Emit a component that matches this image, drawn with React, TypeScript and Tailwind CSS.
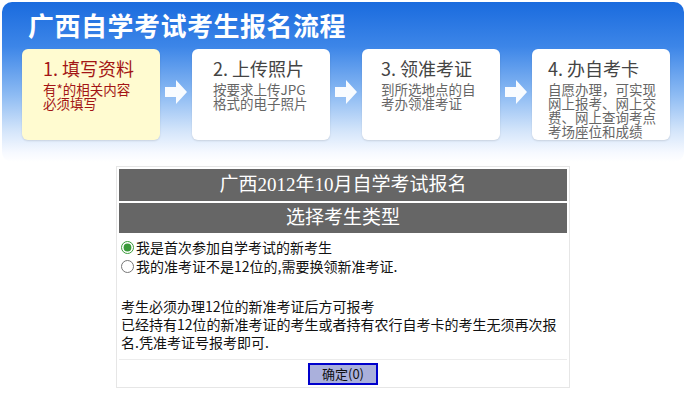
import React from 'react';

const sans = { fontFamily: '"Noto Sans CJK SC", "Liberation Sans", sans-serif' };

type Step = { title: string; lines: string[]; active?: boolean; pad: string };

const steps: Step[] = [
  { title: '1. 填写资料', lines: ['有*的相关内容', '必须填写'], active: true, pad: 'pl-[21px]' },
  { title: '2. 上传照片', lines: ['按要求上传JPG', '格式的电子照片'], pad: 'pl-[21px]' },
  { title: '3. 领准考证', lines: ['到所选地点的自', '考办领准考证'], pad: 'pl-[19px]' },
  { title: '4. 办自考卡', lines: ['自愿办理，可实现', '网上报考、网上交', '费、网上查询考点', '考场座位和成绩'], pad: 'pl-[16px]' },
];

function Arrow() {
  return (
    <div className="flex w-[32px] shrink-0 justify-center pt-[30px]">
      <svg width="24" height="26" viewBox="0 0 24 26">
        <path d="M1 8 H12 V1 L23 13 L12 25 V18 H1 Z" fill="#ffffff" fillOpacity="0.95" />
      </svg>
    </div>
  );
}

function StepBox({ step }: { step: Step }) {
  return (
    <div
      className={`h-[91px] w-[138px] shrink-0 rounded-[6px] pt-[7px] ${step.pad} ${
        step.active ? 'bg-[#fffbd0] text-[#a31515]' : 'bg-white text-[#555]'
      } shadow-[0_1px_2px_rgba(0,0,0,0.12)]`}
    >
      <div className={`text-[18px] leading-[24px] ${step.active ? '' : 'text-[#444]'}`}>{step.title}</div>
      <div className={`mt-[2px] text-[13.5px] leading-[14px] ${step.active ? '' : 'text-[#666]'}`}>
        {step.lines.map((l) => (
          <div key={l} className="whitespace-nowrap">{l}</div>
        ))}
      </div>
    </div>
  );
}

export default function App() {
  return (
    <div className="h-[404px] w-[686px] overflow-hidden bg-white" style={sans}>
      <div className="mx-[2px] mt-[2px] h-[160px] rounded-[10px] bg-[linear-gradient(180deg,#1a6bde_0%,#3d86e8_28%,#8dbbf3_58%,#d2e4fa_80%,#f6f9ff_94%,#ffffff_100%)] px-[20px]">
        <h1 className="pl-[6px] pt-[6px] text-[26px] font-bold leading-[34px] tracking-[0.5px] text-white">
          广西自学考试考生报名流程
        </h1>
        <div className="mt-[7px] flex items-start">
          {steps.map((s, i) => (
            <React.Fragment key={s.title}>
              {i > 0 && <Arrow />}
              <StepBox step={s} />
            </React.Fragment>
          ))}
        </div>
      </div>

      <div className="mx-auto mt-[4px] w-[454px] border border-[#e6e6e6] p-[2px]">
        <div
          className="flex h-[32px] items-center justify-center bg-[#666666] text-[19px] text-white"
          style={{ fontFamily: '"Liberation Serif", "Noto Sans CJK SC", serif' }}
        >
          广西2012年10月自学考试报名
        </div>
        <div
          className="mt-[2px] flex h-[30px] items-center justify-center bg-[#666666] text-[19px] text-white"
          style={{ fontFamily: '"Liberation Serif", "Noto Sans CJK SC", serif' }}
        >
          选择考生类型
        </div>
        <div className="px-[2px] pt-[5px] text-[14px] leading-[19px] text-[#111]">
          <label className="flex items-center gap-[2px]">
            <input type="radio" name="t" defaultChecked className="m-0 h-[13px] w-[13px] accent-[#3a9a3a]" />
            <span>我是首次参加自学考试的新考生</span>
          </label>
          <label className="flex items-center gap-[2px]">
            <input type="radio" name="t" className="m-0 h-[13px] w-[13px]" />
            <span>我的准考证不是12位的,需要换领新准考证.</span>
          </label>
          <div className="mt-[21px] leading-[18px]">
            <div>考生必须办理12位的新准考证后方可报考</div>
            <div className="whitespace-nowrap">已经持有12位的新准考证的考生或者持有农行自考卡的考生无须再次报</div>
            <div>名.凭准考证号报考即可.</div>
          </div>
        </div>
        <div className="mt-[8px] flex justify-center border-t border-[#ececec] pt-[3px]">
          <button className="h-[22px] w-[70px] border-2 border-[#0000cc] bg-[#aab0dc] text-[13px] leading-[18px] text-[#111]">
            确定(0)
          </button>
        </div>
      </div>
    </div>
  );
}
